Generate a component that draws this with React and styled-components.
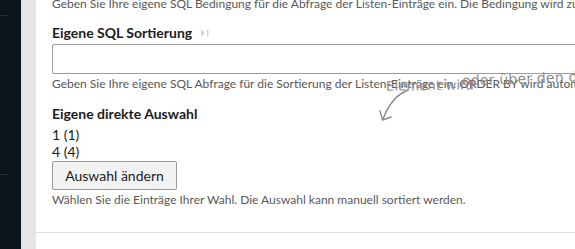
import React from 'react'
import styled, { createGlobalStyle } from 'styled-components'

const GlobalStyle = createGlobalStyle`
  html, body {
    margin: 0;
    padding: 0;
    background: #fff;
    overflow: hidden;
  }
  body {
    font-family: Lato, "Open Sans", "Liberation Sans", sans-serif;
    color: #1c1c1c;
  }
`

export default function App() {
    return (
        <Page>
            <GlobalStyle />
            <Sidebar>
                <SidebarRule top={15} />
                <SidebarRule top={174} />
            </Sidebar>
            <Gutter />
            <Panel>
                <Content>
                    <HelpText first>
                        Geben Sie Ihre eigene SQL Bedingung für die Abfrage der Listen-Einträge ein. Die Bedingung wird zusätzlich angewendet.
                    </HelpText>
                    <Field>
                        <Label below={3}>
                            Eigene SQL Sortierung
                            <TourIcon viewBox="0 0 10 10">
                                <path d="M1 1.5 L5 5 L1 8.5 Z" fill="#d2d2d2" />
                                <rect x="7" y="1.5" width="1.4" height="7" fill="#d2d2d2" />
                            </TourIcon>
                        </Label>
                        <Input type="text" />
                        <HelpText>
                            Geben Sie Ihre eigene SQL Abfrage für die Sortierung der Listen-Einträge ein. ORDER BY wird automatisch hinzugefügt.
                        </HelpText>
                    </Field>
                    <Field space={14}>
                        <Label below={4}>Eigene direkte Auswahl</Label>
                        <Choices>
                            <Choice>1 (1)</Choice>
                            <Choice>4 (4)</Choice>
                        </Choices>
                        <Button type="button">Auswahl ändern</Button>
                        <HelpText>
                            Wählen Sie die Einträge Ihrer Wahl. Die Auswahl kann manuell sortiert werden.
                        </HelpText>
                    </Field>
                </Content>
                <Divider />
            </Panel>
            <Scribble>
                <ScribbleText left={462} top={70} size={14} rotate={-2}>oder über den durch</ScribbleText>
                <ScribbleText left={386} top={78} size={13} rotate={-1}>Element wird</ScribbleText>
                <ScribbleArrow width="40" height="40" viewBox="0 0 40 40">
                    <path d="M32 4 C22 8 13 17 7 33" fill="none" stroke="#8a8a8a" strokeWidth="1.4" strokeLinecap="round" />
                    <path d="M4 25 L6.5 34 L15 31" fill="none" stroke="#8a8a8a" strokeWidth="1.4" strokeLinecap="round" strokeLinejoin="round" />
                </ScribbleArrow>
            </Scribble>
        </Page>
    )
}

const Page = styled.div`
    position: relative;
    display: flex;
    width: 575px;
    height: 249px;
    overflow: hidden;
`

const Sidebar = styled.div`
    position: relative;
    flex: 0 0 21px;
    background: #0e141b;
`

const SidebarRule = styled.div`
    position: absolute;
    left: 0;
    top: ${p => p.top}px;
    width: 7px;
    height: 1px;
    background: #2b323a;
`

const Gutter = styled.div`
    flex: 0 0 15px;
    background: #e6e6e6;
`

const Panel = styled.div`
    flex: 1;
    display: flex;
    flex-direction: column;
    background: #fff;
    min-width: 0;
`

const Content = styled.div`
    padding: 0 0 0 16px;
    height: 235px;
    box-sizing: border-box;
    margin-top: -3px;
`

const Field = styled.div`
    display: flex;
    flex-direction: column;
    margin-top: ${p => p.space ?? 13}px;
`

const Label = styled.div`
    display: flex;
    align-items: center;
    font-weight: 700;
    font-size: 14px;
    line-height: 17px;
    color: #1c1c1c;
    margin-bottom: ${p => p.below}px;
`

const TourIcon = styled.svg`
    width: 10px;
    height: 10px;
    margin-left: 8px;
`

const Input = styled.input`
    box-sizing: border-box;
    width: calc(100% + 20px);
    height: 30px;
    border: 1px solid #9c9c9c;
    border-radius: 2px;
    background: #fff;
    margin: 0;
    outline: none;
`

const HelpText = styled.div`
    font-size: 12px;
    line-height: 14px;
    color: #595959;
    white-space: nowrap;
    margin-top: ${p => (p.first ? '0' : '3px')};
`

const Choices = styled.div`
    display: flex;
    flex-direction: column;
`

const Choice = styled.div`
    font-size: 14px;
    line-height: 17px;
    color: #1c1c1c;
`

const Button = styled.button`
    align-self: flex-start;
    box-sizing: border-box;
    height: 29px;
    width: 125px;
    padding: 0;
    margin-top: 1px;
    border: 1px solid #9a9a9a;
    border-radius: 2px;
    background: #f2f2f2;
    font-family: Lato, "Open Sans", "Liberation Sans", sans-serif;
    font-size: 14px;
    color: #1c1c1c;
`

const Divider = styled.div`
    height: 1px;
    background: #dedede;
`

const Scribble = styled.div`
    position: absolute;
    inset: 0;
    pointer-events: none;
`

const ScribbleText = styled.span`
    position: absolute;
    left: ${p => p.left}px;
    top: ${p => p.top}px;
    transform: rotate(${p => p.rotate}deg);
    font-family: "DejaVu Sans", sans-serif;
    font-size: ${p => p.size}px;
    letter-spacing: 0.2px;
    color: #8c8c8c;
    white-space: nowrap;
`

const ScribbleArrow = styled.svg`
    position: absolute;
    left: 376px;
    top: 86px;
`
